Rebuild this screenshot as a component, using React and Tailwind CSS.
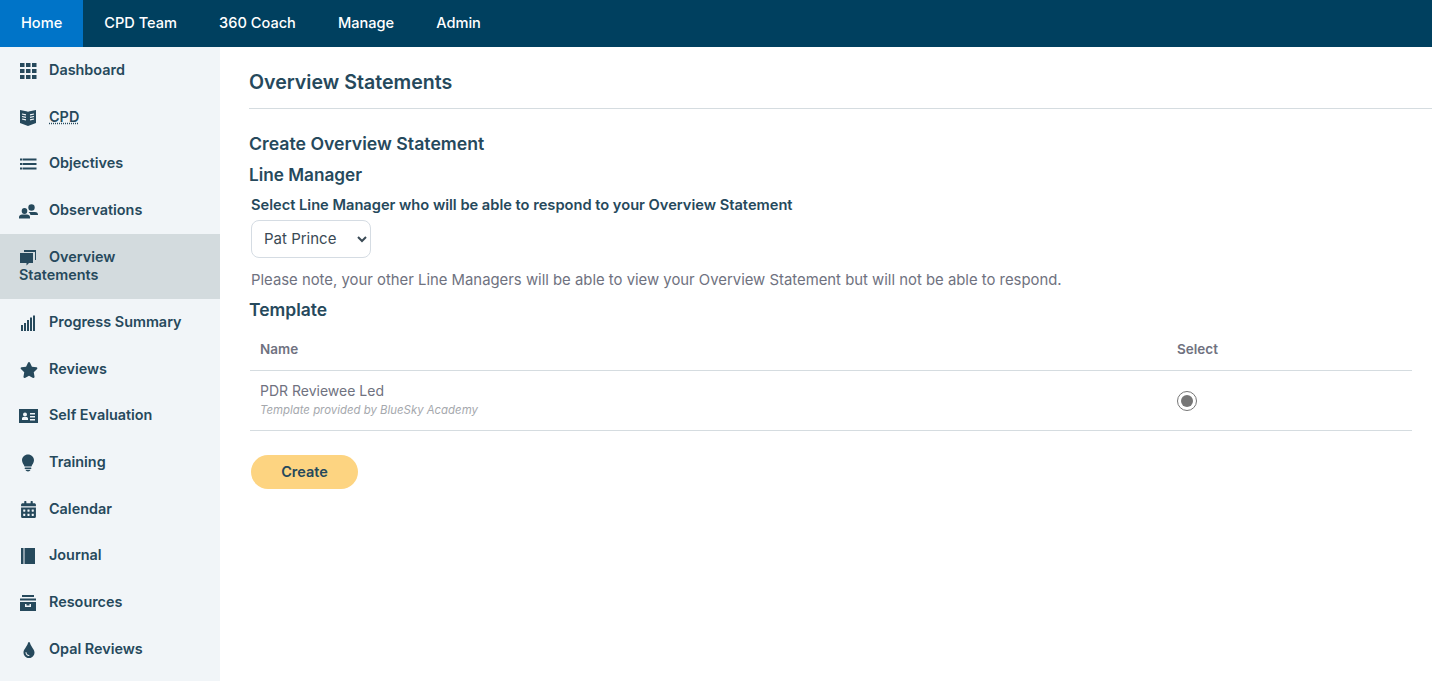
import { FaStar, FaCalendarAlt, FaTint } from 'react-icons/fa';

const navLinks = ['Home', 'CPD Team', '360 Coach', 'Manage', 'Admin'];

const IconGrid = () => (
  <svg viewBox="0 0 18 18" className="w-[18px] h-[18px]" fill="currentColor">
    <rect x="1" y="1" width="4.500" height="4" /><rect x="7" y="1" width="4.500" height="4" /><rect x="13" y="1" width="4.500" height="4" />
    <rect x="1" y="7" width="4.500" height="4" /><rect x="7" y="7" width="4.500" height="4" /><rect x="13" y="7" width="4.500" height="4" />
    <rect x="1" y="13" width="4.500" height="4" /><rect x="7" y="13" width="4.500" height="4" /><rect x="13" y="13" width="4.500" height="4" />
  </svg>
);

const IconBook = () => (
  <svg viewBox="0 0 18 18" className="w-[18px] h-[18px]" fill="currentColor">
    <path d="M1 1l7.500 1.500L9 3l.5-.5L17 1v13l-8 3-8-3z" />
    <path d="M3 5l4 .8M3 7.500l4 .8M3 10l4 .8M15 5l-4 .8M15 7.500l-4 .8M15 10l-4 .8" stroke="#f1f5f8" strokeWidth="1.2" fill="none" />
  </svg>
);

const IconLines = () => (
  <svg viewBox="0 0 18 18" className="w-[18px] h-[18px]" fill="currentColor">
    <rect x="1" y="3.500" width="2" height="2" /><rect x="3.500" y="3.500" width="14" height="2" />
    <rect x="1" y="8" width="2" height="2" /><rect x="3.500" y="8" width="14" height="2" />
    <rect x="1" y="12.500" width="2" height="2" /><rect x="3.500" y="12.500" width="14" height="2" />
  </svg>
);

const IconPeople = () => (
  <svg viewBox="0 0 19 18" className="w-[19px] h-[18px]" fill="currentColor">
    <circle cx="12.500" cy="5.500" r="3.200" />
    <path d="M9.500 10h6.500c1.500 0 3 .8 3 2.500V13h-7.500c-.3-1.300-1-2.300-2-3z" />
    <ellipse cx="5.500" cy="9" rx="2.800" ry="3" />
    <path d="M0 16.500V15c0-1.500 1.500-2.500 3-2.500h5c1.500 0 3 1 3 2.500v1.500z" />
  </svg>
);

const IconChat = () => (
  <svg viewBox="0 0 18 18" className="w-[18px] h-[18px]" fill="currentColor">
    <path d="M5 1h12v10h-1V3H5z" />
    <path d="M1 4h13v10H10l-2.500 2.500V14H1z" />
  </svg>
);

const IconBars = () => (
  <svg viewBox="0 0 18 18" className="w-[18px] h-[18px]" fill="currentColor">
    <rect x="2" y="11" width="2" height="6" /><rect x="5" y="9" width="2" height="8" />
    <rect x="8" y="6" width="2" height="11" /><rect x="11" y="3.500" width="2" height="13.500" />
    <rect x="14" y="1.500" width="2" height="15.500" />
  </svg>
);

const IconCard = () => (
  <svg viewBox="0 0 19 16" className="w-[19px] h-[16px]" fill="currentColor">
    <path
      fillRule="evenodd"
      d="M0 1h19v14H0zM11 5v1.500h5V5zM11 8v1.500h5V8zM11 11v1.500h5V11zM3 12h6v-1.500c0-1-1-1.500-1.500-1.500h-3C3.800 9 3 9.500 3 10.500zM6 8.500a2 2 0 1 0 0-4 2 2 0 0 0 0 4z"
    />
  </svg>
);

const IconBulb = () => (
  <svg viewBox="0 0 18 18" className="w-[18px] h-[18px]" fill="currentColor">
    <path d="M9 .5c3.300 0 6 2.500 6 5.700 0 2.800-2 4.200-2.500 6.300h-7C5 10.400 3 9 3 6.200 3 3 5.700.500 9 .5z" />
    <rect x="5.700" y="13.500" width="6.600" height="1.600" rx=".5" />
    <path d="M6.500 15.800h5c-.3 1-1.300 1.700-2.500 1.700s-2.200-.7-2.500-1.700z" />
  </svg>
);

const IconJournal = () => (
  <svg viewBox="0 0 18 18" className="w-[18px] h-[18px]" fill="currentColor">
    <rect x="2" y="1" width="2.500" height="16" /><rect x="5.500" y="1" width="10.500" height="16" />
  </svg>
);

const IconBox = () => (
  <svg viewBox="0 0 18 18" className="w-[18px] h-[18px]" fill="currentColor">
    <rect x="3" y="1" width="12" height="2" /><rect x="1" y="4.500" width="16" height="2" />
    <path d="M1 8h16v9H1zM6 10v3h6v-3h-1.500v1.500h-3V10z" fillRule="evenodd" />
  </svg>
);

const sideLinks = [
  { label: 'Dashboard', icon: <IconGrid /> },
  { label: 'CPD', icon: <IconBook />, abbr: true },
  { label: 'Objectives', icon: <IconLines /> },
  { label: 'Observations', icon: <IconPeople /> },
  { label: 'Overview Statements', icon: <IconChat />, active: true },
  { label: 'Progress Summary', icon: <IconBars /> },
  { label: 'Reviews', icon: <FaStar className="w-[18px] h-[18px] ml-px" /> },
  { label: 'Self Evaluation', icon: <IconCard /> },
  { label: 'Training', icon: <IconBulb /> },
  { label: 'Calendar', icon: <FaCalendarAlt className="w-[17px] h-[17px] ml-px" /> },
  { label: 'Journal', icon: <IconJournal /> },
  { label: 'Resources', icon: <IconBox /> },
  { label: 'Opal Reviews', icon: <FaTint className="w-[16px] h-[16px] ml-[2px]" /> },
];

export default function App() {
  return (
    <div className="h-[681px] overflow-hidden bg-white text-[#26495c] font-['Inter','Liberation_Sans',sans-serif]">
      {/* top nav */}
      <nav className="flex h-[47px] bg-[#00405f] text-white text-[14.6px] font-medium">
        {navLinks.map((link, i) => (
          <a
            key={link}
            className={`flex items-center px-[21px] ${i === 0 ? 'bg-[#0074c8]' : ''}`}
          >
            {link}
          </a>
        ))}
      </nav>

      <div className="flex">
        {/* sidebar */}
        <aside className="w-[220px] h-[634px] shrink-0 bg-[#f1f5f8] text-[14.4px] font-semibold">
          {sideLinks.map((item) => (
            <div
              key={item.label}
              className={`pl-[19px] pr-[30px] py-[14px] leading-[18.67px] ${item.active ? 'bg-[#d3dbde]' : ''}`}
            >
              <span className="inline-flex items-center w-[30px] h-[10px] align-middle">{item.icon}</span>
              {item.abbr ? (
                <span className="underline decoration-dotted">{item.label}</span>
              ) : (
                item.label
              )}
            </div>
          ))}
        </aside>

        {/* main content */}
        <main className="flex-1 pl-[29px]">
          <h1 className="text-[19.6px] font-semibold leading-[24px] pt-[23px] pb-[14px] border-b border-[#d5dce0]">
            Overview Statements
          </h1>
          <h2 className="mt-[23px] text-[17.7px] font-semibold leading-[24px]">Create Overview Statement</h2>
          <h3 className="mt-[7px] text-[17.2px] font-semibold leading-[24px]">Line Manager</h3>
          <div className="pl-[2px]">
            <label className="block mt-[8px] text-[14.65px] font-semibold leading-[20px]">
              Select Line Manager who will be able to respond to your Overview Statement
            </label>
            <select className="block mt-[5px] w-[120px] h-[38px] pl-[8px] pb-px border border-[#d5dce3] rounded-lg bg-white text-[15px] text-[#3a4a55]">
              <option>Pat Prince</option>
            </select>
            <p className="mt-[12px] text-[14.87px] leading-[20px] text-[#6f7280]">
              Please note, your other Line Managers will be able to view your Overview Statement but will not be able to respond.
            </p>
          </div>
          <h3 className="mt-[8px] text-[17.5px] font-semibold leading-[24px]">Template</h3>

          <div className="ml-px mr-[20px] mt-[9px] text-[#6f7280]">
            <div className="flex items-center h-[40px] pb-[2px] pl-[10px] border-b border-[#d5dce0] text-[13.5px] font-semibold">
              <span className="w-[917px]">Name</span>
              <span>Select</span>
            </div>
            <div className="flex items-center h-[60px] pl-[10px] border-b border-[#d5dce0]">
              <div className="w-[917px] -mt-[1px]">
                <div className="text-[14px] leading-[20px]">PDR Reviewee Led</div>
                <div className="text-[11.4px] italic leading-[18px] text-[#a5a8ad]">Template provided by BlueSky Academy</div>
              </div>
              <input type="radio" checked readOnly className="w-5 h-5 accent-[#767676]" />
            </div>
          </div>

          <button className="block ml-[2px] mt-[24px] w-[107px] h-[34px] rounded-full bg-[#fdd481] text-[14.5px] font-semibold">
            Create
          </button>
        </main>
      </div>
    </div>
  );
}
